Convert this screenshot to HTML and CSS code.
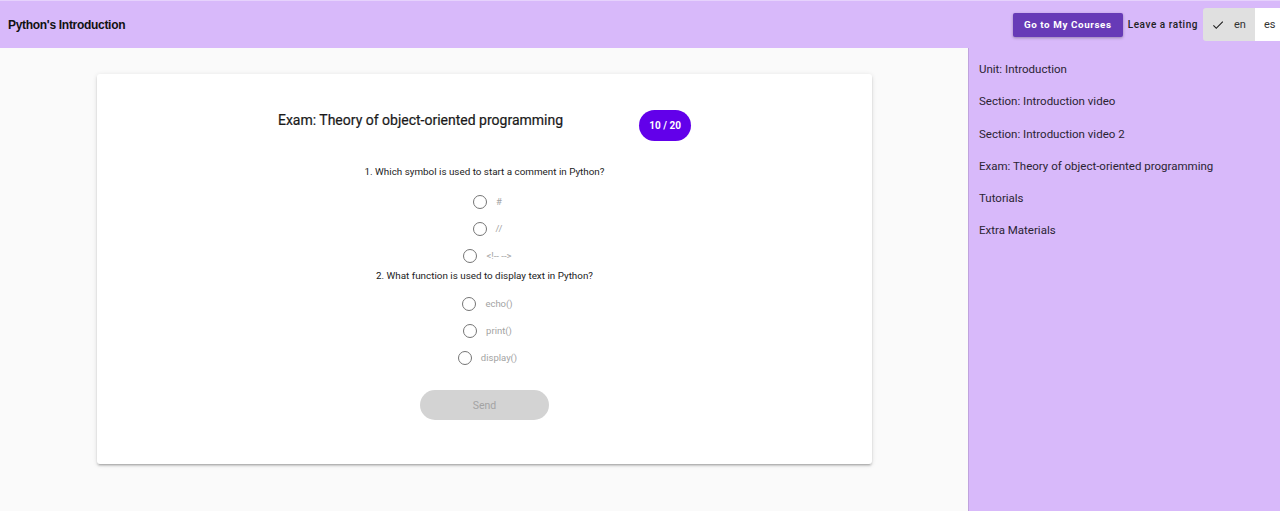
FILE: index.html
```html
<!DOCTYPE html>
<html>
<head>
<meta charset="utf-8">
<link rel="stylesheet" href="styles.css">
</head>
<body>
<header class="topbar">
  <div class="brand">Python's Introduction</div>
  <div class="actions">
    <button class="btn-primary">Go to My Courses</button>
    <span class="rate">Leave a rating</span>
    <div class="toggle">
      <div class="seg seg-on">
        <svg class="check" viewBox="0 0 24 24" width="14" height="14"><path d="M9 16.17L4.83 12l-1.42 1.41L9 19 21 7l-1.41-1.41z" fill="#222"/></svg>
        <span>en</span>
      </div>
      <div class="seg seg-off"><span>es</span></div>
    </div>
  </div>
</header>
<div class="layout">
  <main class="main">
    <section class="card">
      <div class="card-head">
        <h1 class="exam-title">Exam: Theory of object-oriented programming</h1>
        <span class="score">10 / 20</span>
      </div>
      <div class="question">
        <p class="q-text">1. Which symbol is used to start a comment in Python?</p>
        <label class="opt"><span class="radio"></span><span class="opt-text">#</span></label>
        <label class="opt"><span class="radio"></span><span class="opt-text">//</span></label>
        <label class="opt"><span class="radio"></span><span class="opt-text">&lt;!-- --&gt;</span></label>
      </div>
      <div class="question q2">
        <p class="q-text">2. What function is used to display text in Python?</p>
        <label class="opt"><span class="radio"></span><span class="opt-text">echo()</span></label>
        <label class="opt"><span class="radio"></span><span class="opt-text">print()</span></label>
        <label class="opt"><span class="radio"></span><span class="opt-text">display()</span></label>
      </div>
      <div class="send-wrap"><button class="send" disabled>Send</button></div>
    </section>
  </main>
  <aside class="sidebar">
    <a class="nav-item">Unit: Introduction</a>
    <a class="nav-item">Section: Introduction video</a>
    <a class="nav-item">Section: Introduction video 2</a>
    <a class="nav-item">Exam: Theory of object-oriented programming</a>
    <a class="nav-item">Tutorials</a>
    <a class="nav-item">Extra Materials</a>
  </aside>
</div>
</body>
</html>
```

FILE: styles.css
```css
* { box-sizing: border-box; }
html, body { margin: 0; padding: 0; height: 100%; }
body {
  font-family: Roboto, "Liberation Sans", sans-serif;
  background: #fafafa;
  overflow: hidden;
}
.topbar {
  height: 48px;
  background: #d8b9fa;
  border-top: 1px solid #e6d2fc;
  display: flex;
  align-items: center;
  justify-content: space-between;
  padding-left: 8px;
}
.brand {
  font-family: "Liberation Sans", Arial, sans-serif;
  font-weight: bold;
  font-size: 12px;
  color: #111;
  letter-spacing: -0.3px;
}
.actions {
  display: flex;
  align-items: center;
  height: 100%;
}
.btn-primary {
  background: #673ab7;
  color: #fff;
  border: none;
  border-radius: 2px;
  font-family: Roboto, sans-serif;
  font-weight: 700;
  font-size: 9.8px;
  letter-spacing: 0.6px;
  height: 24px;
  width: 110px;
  padding: 0;
  box-shadow: 0 1px 3px rgba(0,0,0,0.3);
}
.rate {
  font-weight: 500;
  font-size: 10px;
  letter-spacing: 0.55px;
  color: #222;
  margin-left: 5px;
}
.toggle {
  display: flex;
  height: 33px;
  margin-left: 5px;
  width: 90px;
  margin-right: -13px;
  border-radius: 3px;
  overflow: hidden;
}
.seg {
  display: flex;
  align-items: center;
  font-size: 11px;
  color: #333;
}
.seg-on {
  background: #e0e0e0;
  width: 52px;
  padding-left: 8px;
  gap: 9px;
}
.seg-off {
  background: #fff;
  flex: 1;
  padding-left: 9px;
}
.layout {
  display: flex;
  height: calc(100% - 48px);
}
.main {
  flex: 1;
  background: #fafafa;
  padding: 26px 0 0 97px;
}
.card {
  width: 775px;
  height: 390px;
  background: #fff;
  border-radius: 3px;
  box-shadow: 0 2px 2px rgba(0,0,0,0.14), 0 3px 1px -2px rgba(0,0,0,0.12), 0 1px 5px rgba(0,0,0,0.12);
  padding-top: 36px;
}
.card-head {
  display: flex;
  justify-content: center;
  align-items: flex-start;
  gap: 76px;
  height: 31px;
}
.exam-title {
  margin: 2px 0 0;
  font-weight: 400;
  font-size: 14px;
  color: #1a1a1a;
  -webkit-text-stroke: 0.2px #1a1a1a;
}
.score {
  background: #6200ea;
  color: #fff;
  font-weight: 700;
  font-size: 10px;
  height: 31px;
  width: 52px;
  border-radius: 16px;
  display: flex;
  align-items: center;
  justify-content: center;
}
.question {
  display: flex;
  flex-direction: column;
  align-items: center;
  margin-top: 25px;
}
.q2 { margin-top: 1px; }
.q-text {
  margin: 0 0 10px;
  font-size: 9.85px;
  color: #222;
  line-height: 12px;
}
.q2 .q-text { margin-bottom: 8px; }
.opt {
  display: flex;
  align-items: center;
  height: 27px;
  gap: 9px;
  padding-left: 6px;
}
.radio {
  width: 14px;
  height: 14px;
  border: 1.5px solid #757575;
  border-radius: 50%;
}
.opt-text {
  font-size: 9.5px;
  color: #a3a3a3;
}
.send-wrap {
  display: flex;
  justify-content: center;
  margin-top: 19px;
}
.send {
  width: 129px;
  height: 30px;
  border: none;
  border-radius: 15px;
  background: #d3d3d3;
  color: #a3a3a3;
  font-family: Roboto, sans-serif;
  font-size: 10.5px;
}
.sidebar {
  width: 312px;
  background: #d8b9fa;
  border-left: 1px solid #bfa3dd;
  padding: 15px 0 0 10px;
  display: flex;
  flex-direction: column;
}
.nav-item {
  font-size: 11.5px;
  color: #2b2433;
  height: 32.3px;
  line-height: 12px;
}
```
